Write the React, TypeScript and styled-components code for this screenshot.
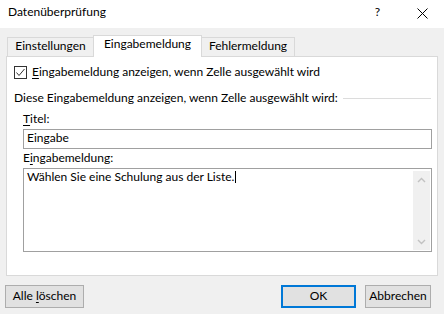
import styled, { createGlobalStyle } from "styled-components";

const GlobalStyle = createGlobalStyle`
  body {
    margin: 0;
    background: #f0f0f0;
    font-family: Lato, "Noto Sans", sans-serif;
    font-size: 12px;
    color: #000;
  }
`;

const Dialog = styled.div`
  width: 444px;
  height: 314px;
  display: flex;
  flex-direction: column;
  overflow: hidden;
  background: #f0f0f0;
  line-height: 16px;
`;

const TitleBar = styled.div`
  height: 28px;
  box-sizing: border-box;
  padding-top: 4px;
  background: #fff;
  display: flex;
  align-items: flex-start;
`;

const Title = styled.span`
  margin-left: 8px;
  flex: 1;
`;

const HelpMark = styled.span`
  margin-right: 37px;
`;

const CloseIcon = styled.svg`
  margin-top: 4px;
  margin-right: 16px;
`;

const TabStrip = styled.div`
  height: 21px;
  margin-top: 7px;
  padding-left: 7px;
  display: flex;
  align-items: flex-end;
`;

const Tab = styled.div<{ $width: number; $active?: boolean; $first?: boolean }>`
  box-sizing: border-box;
  width: ${({ $width }) => $width}px;
  height: ${({ $active }) => ($active ? 22 : 19)}px;
  margin-left: ${({ $first }) => ($first ? 0 : -1)}px;
  margin-bottom: ${({ $active }) => ($active ? -1 : 0)}px;
  border: 1px solid #d9d9d9;
  border-bottom: none;
  background: ${({ $active }) => ($active ? "#fff" : "#f0f0f0")};
  text-align: center;
  position: ${({ $active }) => ($active ? "relative" : "static")};
  z-index: ${({ $active }) => ($active ? 1 : "auto")};
`;

const Panel = styled.div`
  margin: 0 6px;
  height: 220px;
  box-sizing: border-box;
  border: 1px solid #d9d9d9;
  background: #fff;
  padding: 7px 6px 0 7px;
  display: flex;
  flex-direction: column;
`;

const CheckRow = styled.label`
  display: flex;
  align-items: center;
  gap: 5px;
  height: 16px;
`;

const CheckBox = styled.span`
  width: 13px;
  height: 13px;
  box-sizing: border-box;
  border: 1px solid #333;
  background: #fff;
  display: flex;
  align-items: center;
  justify-content: center;
`;

const Key = styled.span`
  text-decoration: underline;
  text-underline-offset: 2px;
`;

const GroupHeading = styled.div`
  margin-top: 10px;
  display: flex;
  align-items: center;
`;

const Rule = styled.div`
  flex: 1;
  height: 1px;
  margin-left: 5px;
  margin-top: 1px;
  background: #dcdcdc;
`;

const Fields = styled.div`
  margin-left: 9px;
  display: flex;
  flex-direction: column;
`;

const FieldLabel = styled.div<{ $gap: number }>`
  margin-top: ${({ $gap }) => $gap}px;
`;

const TextBox = styled.div`
  margin-top: 2px;
  width: 409px;
  height: 20px;
  box-sizing: border-box;
  border: 1px solid #a0a0a0;
  padding: 0 3px;
  background: #fff;
`;

const MessageBox = styled.div`
  margin-top: 2px;
  width: 409px;
  height: 84px;
  box-sizing: border-box;
  border: 1px solid #a0a0a0;
  background: #fff;
  display: flex;
`;

const MessageText = styled.div`
  flex: 1;
  padding: 0 3px;
`;

const Caret = styled.span`
  display: inline-block;
  width: 1px;
  height: 12px;
  margin-left: 1px;
  background: #000;
  vertical-align: -2px;
`;

const ScrollBar = styled.div`
  width: 17px;
  margin: 2px 1px 1px 0;
  background: #f0f0f0;
  display: flex;
  flex-direction: column;
  justify-content: space-between;
`;

const ArrowCell = styled.div`
  height: 17px;
  display: flex;
  align-items: center;
  justify-content: center;
`;

const Footer = styled.div`
  flex: 1;
  display: flex;
  align-items: flex-start;
  padding: 9px 13px 0 5px;
`;

const Button = styled.button<{ $width: number; $primary?: boolean; $push?: boolean; $gap?: number }>`
  width: ${({ $width }) => $width}px;
  height: 23px;
  box-sizing: border-box;
  margin-left: ${({ $push, $gap }) => ($push ? "auto" : `${$gap ?? 0}px`)};
  padding: 0 0 1px;
  border: ${({ $primary }) => ($primary ? "2px solid #0078d7" : "1px solid #adadad")};
  background: #e1e1e1;
  font: inherit;
  line-height: 16px;
  color: #000;
`;

const Chevron = ({ up }: { up?: boolean }) => (
  <svg width="9" height="6" viewBox="0 0 9 6">
    <polyline
      points={up ? "1,5 4.5,1.5 8,5" : "1,1 4.5,4.5 8,1"}
      fill="none"
      stroke="#c2c2c2"
      strokeWidth="1.4"
    />
  </svg>
);

function App() {
  return (
    <>
      <GlobalStyle />
      <Dialog>
        <TitleBar>
          <Title>Datenüberprüfung</Title>
          <HelpMark>?</HelpMark>
          <CloseIcon width="11" height="11" viewBox="0 0 11 11">
            <path d="M0.5 0.5 L10.5 10.5 M10.5 0.5 L0.5 10.5" stroke="#000" strokeWidth="1" />
          </CloseIcon>
        </TitleBar>

        <TabStrip>
          <Tab $width={87} $first>
            Einstellungen
          </Tab>
          <Tab $width={109} $active>
            Eingabemeldung
          </Tab>
          <Tab $width={94}>Fehlermeldung</Tab>
        </TabStrip>

        <Panel>
          <CheckRow>
            <CheckBox>
              <svg width="11" height="11" viewBox="0 0 11 11">
                <polyline points="1.5,5.5 4,8.5 9.5,2" fill="none" stroke="#333" strokeWidth="1" />
              </svg>
            </CheckBox>
            <span>
              <Key>E</Key>ingabemeldung anzeigen, wenn Zelle ausgewählt wird
            </span>
          </CheckRow>

          <GroupHeading>
            <span>Diese Eingabemeldung anzeigen, wenn Zelle ausgewählt wird:</span>
            <Rule />
          </GroupHeading>

          <Fields>
            <FieldLabel $gap={5}>
              <Key>T</Key>itel:
            </FieldLabel>
            <TextBox>Eingabe</TextBox>
            <FieldLabel $gap={1}>
              E<Key>i</Key>ngabemeldung:
            </FieldLabel>
            <MessageBox>
              <MessageText>
                Wählen Sie eine Schulung aus der Liste.
                <Caret />
              </MessageText>
              <ScrollBar>
                <ArrowCell>
                  <Chevron up />
                </ArrowCell>
                <ArrowCell>
                  <Chevron />
                </ArrowCell>
              </ScrollBar>
            </MessageBox>
          </Fields>
        </Panel>

        <Footer>
          <Button $width={79}>
            Alle <Key>l</Key>öschen
          </Button>
          <Button $width={75} $primary $push>
            OK
          </Button>
          <Button $width={66} $gap={9}>
            Abbrechen
          </Button>
        </Footer>
      </Dialog>
    </>
  );
}

export default App;
